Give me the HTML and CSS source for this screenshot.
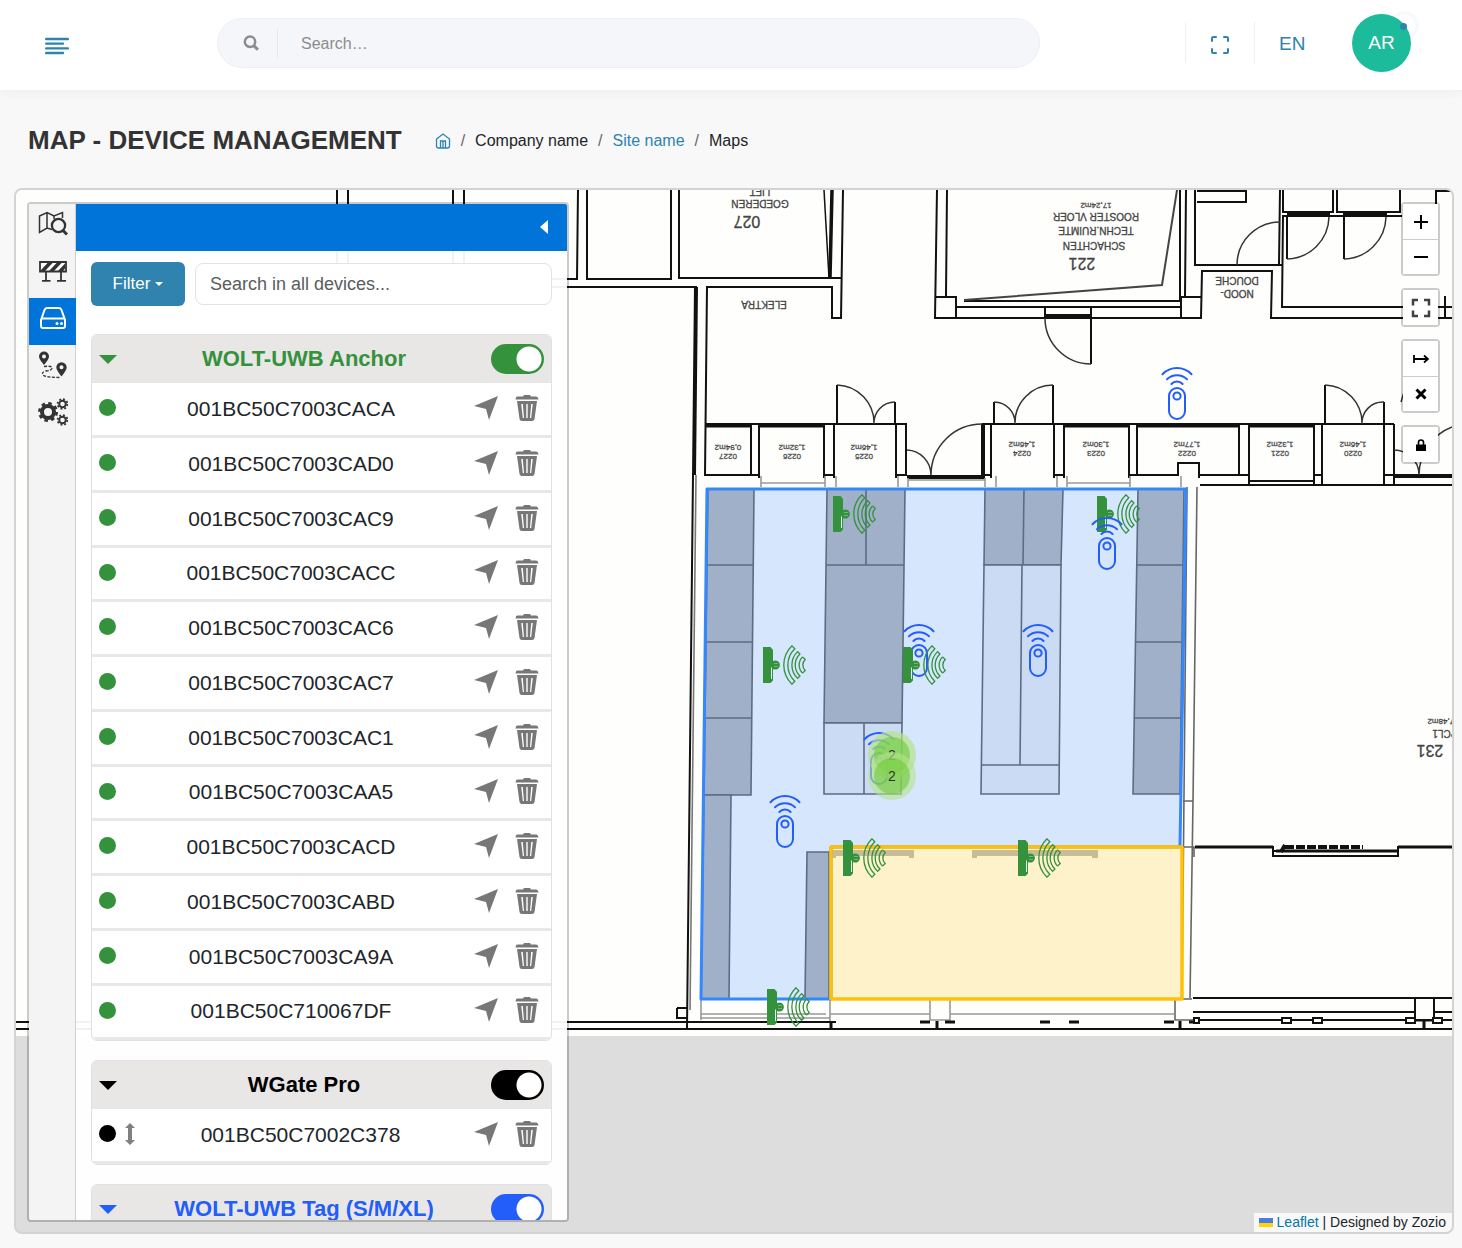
FILE: index.html
```html
<!DOCTYPE html>
<html lang="en">
<head>
<meta charset="utf-8">
<meta name="viewport" content="width=device-width, initial-scale=1">
<title>Map - Device management</title>
<link rel="stylesheet" href="styles.css">
</head>
<body>
<svg class="defs" aria-hidden="true">
  <symbol id="i-send" viewBox="0 0 24 24"><path d="M0 10 24 0 15 24 12 13Z"/></symbol>
  <symbol id="i-trash" viewBox="0 0 24 26"><path d="M1 2.500Q1 1.500 3 1.500H8L9 0h6l1 1.500h5Q23 1.500 23.500 4.500H.5Z"/><path fill-rule="evenodd" d="M2 6H22L19.500 24Q19.200 26 17 26H7Q4.800 26 4.500 24ZM6.200 9 7.800 23H9L7.800 9ZM11.300 9V23h1.400V9ZM16.200 9 15 23h1.200L17.800 9Z"/></symbol>
</svg>

<header class="topbar">
  <button class="icon-btn menu-btn" type="button" aria-label="Toggle menu">
    <svg width="24" height="18" viewBox="0 0 24 18" stroke="#2f83af" stroke-width="2.400" stroke-linecap="round"><path d="M1.200 2H22.800M1.200 6.600H18M1.200 11.400H22.800M1.200 16H18"/></svg>
  </button>
  <form class="search" role="search">
    <svg width="16" height="16" viewBox="0 0 16 16" fill="none" stroke="#8c8c8c" stroke-width="2.500"><circle cx="7" cy="6.800" r="5.200"/><path d="M10.800 10.600 15 14.800" stroke-width="3"/></svg>
    <input type="text" placeholder="Search…" aria-label="Search">
  </form>
  <nav class="tools">
    <button class="icon-btn fs-btn" type="button" aria-label="Full screen">
      <svg width="20" height="20" viewBox="0 0 20 20" fill="none" stroke="#2f83af" stroke-width="2" stroke-linecap="round"><path d="M2 6V3.500Q2 2 3.500 2H6M14 2h2.500Q18 2 18 3.500V6M18 14v2.500Q18 18 16.500 18H14M6 18H3.500Q2 18 2 16.500V14"/></svg>
    </button>
    <a class="lang" href="#lang">EN</a>
    <a class="avatar" href="#profile"><span class="ring"></span><span class="face">AR</span><span class="dot"></span></a>
  </nav>
</header>

<main class="page">
  <div class="titlebar">
    <h1>MAP - DEVICE MANAGEMENT</h1>
    <nav class="crumbs" aria-label="Breadcrumb">
      <a href="#home" aria-label="Home"><svg width="16" height="16" viewBox="0 0 16 16" fill="none" stroke="#2f83af" stroke-width="1.300"><path d="M1.500 6 8 1l6.500 5v7q0 2-2 2h-9q-2 0-2-2ZM5.500 15V8h5v7M8 8v7"/></svg></a>
      <span class="sep">/</span><span>Company name</span>
      <span class="sep">/</span><a href="#site">Site name</a>
      <span class="sep">/</span><span>Maps</span>
    </nav>
  </div>

  <section class="map" aria-label="Site map">
    <svg class="plan" viewBox="16 190 1436 1042" preserveAspectRatio="xMinYMin slice" role="img" aria-label="Floor plan">
      <defs>
        <g id="tag" fill="none" stroke="#235dfa" stroke-width="2" stroke-linecap="round">
          <path d="M-14.500 6.200A20 20 0 0 1 14.500 6.200M-10 11.200A14.500 14.500 0 0 1 10 11.200M-5.600 16A7.400 7.400 0 0 1 5.600 16"/>
          <rect x="-8" y="20" width="16" height="31" rx="8"/><circle cy="28" r="3.600"/>
        </g>
        <g id="anchor">
          <path d="M0-18H7.500L10-15V-4A4.600 4.600 0 1 1 10 4V15.500L7.500 18H0Z" fill="#34913c"/>
          <path d="M8.500 2.500V14" stroke="#e8f0fc"/><path d="M12-1.500v0M12 1.500v0M14-1.500v0M14 1.500v0" stroke="#dcebe0" stroke-linecap="round"/>
          <g transform="translate(47.500)" fill="none" stroke="#34913c" stroke-width="1.300">
            <path d="M-18.500-19.200A26.600 26.600 0 0 0-18.500 19.200L-15.700 16.300A22.600 22.600 0 0 1-15.700-16.300Z"/>
            <path d="M-12.900-13.400A18.600 18.600 0 0 0-12.900 13.400L-10.600 11A15.300 15.300 0 0 1-10.600-11Z"/>
            <path d="M-7.900-8.100A11.300 11.300 0 0 0-7.900 8.100M-7.900-8.100-5.300-5.500A7.600 7.600 0 0 0-5.300 5.500L-7.900 8.100"/>
          </g>
        </g>
      </defs>

      <rect x="16" y="190" width="1436" height="846" fill="#fefefd"/>
      <!-- storage racks -->
      <g fill="#bbb" stroke="#666" stroke-width="1.600">
        <path d="M708 489H754L751 795H704ZM707 565H753M706 642H752M705 718H752"/>
        <path d="M704 795H731L729 999H701Z"/>
        <path d="M827 489H905L902 723H824ZM826 565H904M866 489V565"/>
        <path d="M985 489H1063L1061 565H984ZM1024 489 1023 565"/>
        <path d="M1138 489H1184L1180 794H1133ZM1137 565H1183M1136 642H1182M1135 718H1181"/>
        <path d="M807 852H829V999H805Z"/>
      </g>
      <g fill="#f0f0f0" stroke="#666" stroke-width="1.600">
        <path d="M824 723H902L901 794H824ZM864 723V794"/>
        <path d="M984 565H1061L1059 794H981ZM982 765H1059M1022 565 1020 765"/>
      </g>
      <!-- structural walls -->
      <g fill="none" stroke="#111" stroke-width="2">
        <path d="M337 190V279M348 190V279H453V190M464 190V279H577L578 190M300 287H697M587 190V279H671V190M679 190V278H841M843 190 841 318H832V287H707L705 475H759"/>
        <path d="M824 190 829 278" stroke-width="1.500"/>
        <path d="M832 190 830 278" stroke-width="3.500"/>
        <path d="M696 287 694 475" stroke-width="4"/>
        <path d="M693 475 687 1028M677 1008H687M677 1008V1018H687"/>
        <path d="M937 190 935 318H1201L1202 271H1272L1271 318H1452M947 190 946 296M935 297H956V318M956 307H1181M964 301H1180M1180 190V300M1186 190 1185 296M1181 318V297H1201"/>
        <path d="M964 300 1162 285 1177 190" stroke="#444"/>
        <path d="M1195 190V265H1282M1280 190 1279 265M1197 191H1246V202H1197M1283 190V212H1333V190M1337 190V212H1400V190M1402 216H1283L1282 307H1452M1452 191H1436V210M1445 296V318"/>
        <path d="M1287 214H1330M1343 214H1387" stroke-width="4"/>
        <path d="M1045 318V307M1091 307V364"/><path d="M1045 316H1091" stroke-width="4"/>
        <path d="M705 424H907M982 424H1394M751 424V475M759 424V478M824 424V478M834 424V478M896 424V478M906 424V476M824 475H834M896 475H906M991 424V478M982 475H991M1054 424V478M1064 424V478M1054 475H1064M1129 424V478M1137 424V475M1129 475H1178V463H1199V478M1199 475H1249M1239 424V475M1249 424V484M1314 424V484M1322 424V484M1314 475H1322M1249 481H1314M1384 402V484M1394 424V484M1200 485H1452M1384 475H1394"/>
        <path d="M705 426H751M759 426H824M1064 426H1129M1137 426H1239M1249 426H1314" stroke-width="3"/>
        <path d="M907 477H985M983 424V477M1394 476H1452" stroke-width="4"/>
        <path d="M837 424V385M895 402V424M994 424V402M1053 385V424M1325 424V385M1287 216V259M1344 216V259"/>
      </g>
      <g fill="none" stroke="#333" stroke-width="1.500">
        <path d="M837 385A38 38 0 0 1 874 424A21 21 0 0 1 895 402M907 450A25 25 0 0 1 931 475A51 51 0 0 1 982 424M994 402A21 21 0 0 1 1015 424A38 38 0 0 1 1053 385M1325 385A38 38 0 0 1 1362 424A21 21 0 0 1 1384 402M1237 265A43 43 0 0 1 1280 222M1287 259A43 43 0 0 0 1329 217M1344 259A43 43 0 0 0 1386 217M1045 318A46 46 0 0 0 1091 364M1394 450A25 25 0 0 1 1419 475A52 52 0 0 1 1452 427M1401 402 1404 392"/>
      </g>
      <g fill="none" stroke="#999" stroke-width="1.600">
        <path d="M761 476V487M825 476V487M836 476V487M898 476V487M908 478V487M985 478V487M996 476V487M1057 476V487M1067 476V487M1130 476V487M1181 476V487M761 483H825M908 480H985M1067 483H1130"/>
        <path d="M696 475 690 1010" stroke="#777"/>
        <path d="M1197 487 1193 801 1190 998M1187 487 1182 1000M1183 801H1193M1181 847H1194V857M1182 999H1192M1175 1000V1020H1193" stroke="#666"/>
        <path d="M701 1000V1020M830 1000V1022M930 1000V1020H950V1000M701 1014H826M701 1018H830M830 1014H930M950 1014H1175"/>
      </g>
      <g fill="#bbb"><path d="M831 850H914V858H909V856H836V858H831ZM972 850H1098V858H1092V856H977V858H972Z"/></g>
      <!-- lower facade -->
      <g fill="none" stroke="#111" stroke-width="2">
        <path d="M16 1022H836M16 1029H1452M1193 998H1452M1193 1012H1452M1193 1020H1452"/>
        <path d="M1195 847H1273M1398 847H1452M831 1022V1029M937 1021V1029M1180 1021V1029M1424 1020V1029M920 1022H930M945 1022H955M1040 1022H1050M1069 1022H1079M1164 1022H1174M1189 1022H1199M1415 1020H1434" stroke-width="3"/>
        <path d="M1273 846V856H1398V846M1273 851H1398"/><path d="M1276 851H1398" stroke-width="3"/><path d="M1281 852 1285 845M1285 847H1363" stroke-width="4" stroke-dasharray="9 2"/>
        <g fill="#fefefd"><path d="M1415 998H1434V1020H1415Z"/><path d="M1194 1018h5v5h-5ZM1282 1018h9v5h-9ZM1313 1018h9v5h-9ZM1406 1018h9v5h-9ZM1433 1018h9v5h-9Z"/></g>
      </g>
      <!-- room names, printed upside down on the plan -->
      <g class="rooms">
        <g transform="rotate(180 760 205)"><text x="760" y="222">LIFT</text><text x="760" y="210">GOEDEREN</text><text class="num" x="773" y="194">027</text></g>
        <g transform="rotate(180 764 305)"><text x="764" y="309">ELEKTRA</text></g>
        <g transform="rotate(180 1096 230)"><text class="tiny" x="1096" y="257">17,24m2</text><text x="1096" y="247">ROOSTER VLOER</text><text x="1096" y="233">TECHN.RUIMTE</text><text x="1098" y="218">SCHACHTEN</text><text class="num" x="1110" y="202">221</text></g>
        <g transform="rotate(180 1237 287)"><text x="1237" y="297">DOUCHE</text><text x="1237" y="284">NOOD-</text></g>
        <g class="tiny">
          <text transform="rotate(180 728 452)" x="728" y="459">0,94m2<tspan x="728" dy="-9">0227</tspan></text>
          <text transform="rotate(180 792 452)" x="792" y="459">1,32m2<tspan x="792" dy="-9">0226</tspan></text>
          <text transform="rotate(180 864 452)" x="864" y="459">1,46m2<tspan x="864" dy="-9">0225</tspan></text>
          <text transform="rotate(180 1022 450)" x="1022" y="458">1,46m2<tspan x="1022" dy="-9">0224</tspan></text>
          <text transform="rotate(180 1096 450)" x="1096" y="458">1,30m2<tspan x="1096" dy="-9">0223</tspan></text>
          <text transform="rotate(180 1187 450)" x="1187" y="458">1,77m2<tspan x="1187" dy="-9">0222</tspan></text>
          <text transform="rotate(180 1280 450)" x="1280" y="458">1,32m2<tspan x="1280" dy="-9">0221</tspan></text>
          <text transform="rotate(180 1353 450)" x="1353" y="458">1,46m2<tspan x="1353" dy="-9">0220</tspan></text>
          <text transform="rotate(180 1443 722)" x="1443" y="725">17,48m2</text>
        </g>
        <text transform="rotate(180 1445 734)" x="1445" y="738">PCL1</text>
        <text class="num" transform="rotate(180 1430 751)" x="1430" y="757">231</text>
      </g>
      <!-- zones -->
      <path d="M707 489H1186L1180 847H831V999H701Z" fill="#3388ff" fill-opacity=".2" stroke="#3388ff" stroke-width="3" stroke-linejoin="round"/>
      <path d="M831 847H1182V999H831Z" fill="#ffc107" fill-opacity=".2" stroke="#ffc107" stroke-width="3.500" stroke-linejoin="round"/>
      <!-- devices -->
      <use href="#tag" x="1177" y="368"/><use href="#tag" x="919" y="625"/><use href="#tag" x="1038" y="625"/><use href="#tag" x="879" y="733"/><use href="#tag" x="785" y="796"/>
      <use href="#anchor" x="833" y="514"/><use href="#anchor" x="1097" y="514"/><use href="#anchor" x="763" y="665"/><use href="#anchor" x="903" y="665"/><use href="#anchor" x="843" y="858"/><use href="#anchor" x="1018" y="858"/><use href="#anchor" x="767" y="1007"/>
      <use href="#tag" x="1107" y="518"/>
      <g class="cluster"><circle cx="892" cy="755" r="24" fill="#b5e28c" fill-opacity=".7"/><circle cx="892" cy="755" r="18" fill="#6ecc39" fill-opacity=".6"/><text x="892" y="760">2</text></g>
      <g class="cluster"><circle cx="892" cy="776" r="24" fill="#b5e28c" fill-opacity=".6"/><circle cx="892" cy="776" r="18" fill="#6ecc39" fill-opacity=".6"/><text x="892" y="781">2</text></g>
    </svg>

    <aside class="sidebar">
      <nav class="tabs" aria-label="Map panels">
        <button type="button" aria-label="Maps"><svg width="30" height="26" viewBox="0 0 30 26" fill="none" stroke="#333" stroke-width="1.500"><path d="M14 18.500 9 17 1.500 21.500V5L9 1.500 16 5 24.500 1.500V7M9 1.500V17M16 5V8"/><circle cx="20.500" cy="14.500" r="6.600" stroke-width="2.300"/><path d="M25 19.500 29 23.500" stroke-width="3"/></svg></button>
        <button type="button" aria-label="Zones"><svg width="28" height="22" viewBox="0 0 28 22"><path d="M1 2H27V11.500H1Z" fill="#fff" stroke="#333" stroke-width="1.800"/><path d="M2 10 9 2.500h5L6 11H2ZM10 11l8-8.500h5L15 11ZM19 11l7-7.500V8.500L24 11Z" fill="#333"/><path d="M7 12V20M3 20.800h8.500M22 12v8M18 20.800h9" stroke="#333" stroke-width="1.800"/></svg></button>
        <button class="active" type="button" aria-label="Devices"><svg width="26" height="22" viewBox="0 0 26 22" fill="none" stroke="#fff" stroke-width="2"><path d="M1 13 4.500 3Q5.200 1 7 1H19Q20.800 1 21.500 3L25 13V19Q25 21 23 21H3Q1 21 1 19ZM1.500 11.500H24.500"/><path d="M17 16.500v0M21.500 16.500v0" stroke-width="3" stroke-linecap="round"/></svg></button>
        <button type="button" aria-label="Routes"><svg width="30" height="28" viewBox="0 0 30 28"><path fill="#333" fill-rule="evenodd" d="M6 14Q1 8 1 5.500A5 5 0 0 1 11 5.500Q11 8 6 14ZM6 3.500A2 2 0 1 0 6 7.500 2 2 0 0 0 6 3.500ZM23.500 25.500Q18.300 19 18.300 16.500A5.200 5.200 0 0 1 28.700 16.500Q28.700 19 23.500 25.500ZM23.500 14.300A2 2 0 1 0 23.500 18.300 2 2 0 0 0 23.500 14.300Z"/><path d="M6 15.500Q15 14.500 14 17.500 13 19.500 8 20 3 21 5 24 8 26.500 23 26.500" fill="none" stroke="#333" stroke-width="1.300" stroke-dasharray="3 1.500"/></svg></button>
        <button type="button" aria-label="Settings"><svg width="30" height="28" viewBox="0 0 30 28" fill="none" stroke="#333"><circle cx="10" cy="14" r="6" stroke-width="4"/><circle cx="10" cy="14" r="8.700" stroke-width="2.600" stroke-dasharray="3.500 3.333"/><circle cx="24.500" cy="6" r="3.300" stroke-width="2"/><circle cx="24.500" cy="6" r="4.900" stroke-width="1.800" stroke-dasharray="1.900 1.940"/><circle cx="24.500" cy="22" r="3.300" stroke-width="2"/><circle cx="24.500" cy="22" r="4.900" stroke-width="1.800" stroke-dasharray="1.900 1.940"/></svg></button>
      </nav>
      <div class="panel">
        <div class="panel-head"><button class="icon-btn" type="button" aria-label="Collapse"><svg width="10" height="16" viewBox="0 0 10 16" fill="#fff"><path d="M9 1V15L1 8Z"/></svg></button></div>
        <div class="panel-body">
          <div class="filters">
            <button class="filter" type="button">Filter<span class="caret"></span></button>
            <input class="find" type="text" placeholder="Search in all devices..." aria-label="Search in all devices">
          </div>

          <section class="group green">
            <div class="group-head"><span class="fold"></span><h2>WOLT-UWB Anchor</h2><input class="toggle" type="checkbox" aria-label="Show WOLT-UWB Anchor" checked></div>
            <ul>
              <li><span class="status"></span><span class="name">001BC50C7003CACA</span><button type="button" aria-label="Locate"><svg width="24" height="24"><use href="#i-send"/></svg></button><button type="button" aria-label="Delete"><svg width="24" height="26"><use href="#i-trash"/></svg></button></li>
              <li><span class="status"></span><span class="name">001BC50C7003CAD0</span><button type="button" aria-label="Locate"><svg width="24" height="24"><use href="#i-send"/></svg></button><button type="button" aria-label="Delete"><svg width="24" height="26"><use href="#i-trash"/></svg></button></li>
              <li><span class="status"></span><span class="name">001BC50C7003CAC9</span><button type="button" aria-label="Locate"><svg width="24" height="24"><use href="#i-send"/></svg></button><button type="button" aria-label="Delete"><svg width="24" height="26"><use href="#i-trash"/></svg></button></li>
              <li><span class="status"></span><span class="name">001BC50C7003CACC</span><button type="button" aria-label="Locate"><svg width="24" height="24"><use href="#i-send"/></svg></button><button type="button" aria-label="Delete"><svg width="24" height="26"><use href="#i-trash"/></svg></button></li>
              <li><span class="status"></span><span class="name">001BC50C7003CAC6</span><button type="button" aria-label="Locate"><svg width="24" height="24"><use href="#i-send"/></svg></button><button type="button" aria-label="Delete"><svg width="24" height="26"><use href="#i-trash"/></svg></button></li>
              <li><span class="status"></span><span class="name">001BC50C7003CAC7</span><button type="button" aria-label="Locate"><svg width="24" height="24"><use href="#i-send"/></svg></button><button type="button" aria-label="Delete"><svg width="24" height="26"><use href="#i-trash"/></svg></button></li>
              <li><span class="status"></span><span class="name">001BC50C7003CAC1</span><button type="button" aria-label="Locate"><svg width="24" height="24"><use href="#i-send"/></svg></button><button type="button" aria-label="Delete"><svg width="24" height="26"><use href="#i-trash"/></svg></button></li>
              <li><span class="status"></span><span class="name">001BC50C7003CAA5</span><button type="button" aria-label="Locate"><svg width="24" height="24"><use href="#i-send"/></svg></button><button type="button" aria-label="Delete"><svg width="24" height="26"><use href="#i-trash"/></svg></button></li>
              <li><span class="status"></span><span class="name">001BC50C7003CACD</span><button type="button" aria-label="Locate"><svg width="24" height="24"><use href="#i-send"/></svg></button><button type="button" aria-label="Delete"><svg width="24" height="26"><use href="#i-trash"/></svg></button></li>
              <li><span class="status"></span><span class="name">001BC50C7003CABD</span><button type="button" aria-label="Locate"><svg width="24" height="24"><use href="#i-send"/></svg></button><button type="button" aria-label="Delete"><svg width="24" height="26"><use href="#i-trash"/></svg></button></li>
              <li><span class="status"></span><span class="name">001BC50C7003CA9A</span><button type="button" aria-label="Locate"><svg width="24" height="24"><use href="#i-send"/></svg></button><button type="button" aria-label="Delete"><svg width="24" height="26"><use href="#i-trash"/></svg></button></li>
              <li><span class="status"></span><span class="name">001BC50C710067DF</span><button type="button" aria-label="Locate"><svg width="24" height="24"><use href="#i-send"/></svg></button><button type="button" aria-label="Delete"><svg width="24" height="26"><use href="#i-trash"/></svg></button></li>
            </ul>
          </section>

          <section class="group black">
            <div class="group-head"><span class="fold"></span><h2>WGate Pro</h2><input class="toggle" type="checkbox" aria-label="Show WGate Pro" checked></div>
            <ul>
              <li><span class="status"></span><svg class="updown" width="10" height="22" viewBox="0 0 10 22" fill="#808080"><path d="M5 0 10 5H7V17H10L5 22 0 17H3V5H0Z"/></svg><span class="name">001BC50C7002C378</span><button type="button" aria-label="Locate"><svg width="24" height="24"><use href="#i-send"/></svg></button><button type="button" aria-label="Delete"><svg width="24" height="26"><use href="#i-trash"/></svg></button></li>
            </ul>
          </section>

          <section class="group blue">
            <div class="group-head"><span class="fold"></span><h2>WOLT-UWB Tag (S/M/XL)</h2><input class="toggle" type="checkbox" aria-label="Show WOLT-UWB Tag" checked></div>
          </section>
        </div>
      </div>
    </aside>

    <div class="controls">
      <div class="bar">
        <button type="button" aria-label="Zoom in"><svg width="16" height="16" viewBox="0 0 16 16" stroke="#000" stroke-width="2"><path d="M1 8H15M8 1V15"/></svg></button>
        <button type="button" aria-label="Zoom out"><svg width="16" height="16" viewBox="0 0 16 16" stroke="#000" stroke-width="2"><path d="M1 8H15"/></svg></button>
      </div>
      <div class="bar"><button type="button" aria-label="Full screen map"><svg width="20" height="20" viewBox="0 0 20 20" fill="none" stroke="#404040" stroke-width="2.500"><path d="M2 7.500V2H7M13 2h5V7.500M18 12.500V18H13M7 18H2V12.500"/></svg></button></div>
      <div class="bar">
        <button type="button" aria-label="Measure"><svg width="16" height="10" viewBox="0 0 16 10" fill="none" stroke="#000" stroke-width="1.800"><path d="M1 1V9M1 5H15M11 1.500 15 5 11 8.500"/></svg></button>
        <button type="button" aria-label="Clear"><svg width="12" height="12" viewBox="0 0 12 12" stroke="#000" stroke-width="3"><path d="M1.500 1.500 10.500 10.500M10.500 1.500 1.500 10.500"/></svg></button>
      </div>
      <div class="bar"><button type="button" aria-label="Lock"><svg width="10" height="12" viewBox="0 0 10 12"><path d="M0 5.500H10V12H0Z"/><path d="M2.500 6V3.500a2.500 2.500 0 0 1 5 0V6" fill="none" stroke="#000" stroke-width="1.600"/></svg></button></div>
    </div>

    <div class="credit"><svg width="14" height="9" viewBox="0 0 14 9"><path fill="#4c7be1" d="M0 0h14v5H0z"/><path fill="#ffd500" d="M0 5h14v4H0z"/></svg><span><a href="#leaflet">Leaflet</a> | Designed by Zozio</span></div>
  </section>
</main>
</body>
</html>
```
FILE: styles.css
```css
* { box-sizing: border-box; }
body {
  margin: 0;
  height: 100vh;
  display: flex;
  flex-direction: column;
  background: #f8f8f8;
  color: #212529;
  font: 16px/24px "Liberation Sans", Arial, sans-serif;
}
button, input { font: inherit; color: inherit; margin: 0; }
button { cursor: pointer; padding: 0; border: 0; background: none; }
a { color: #2f83af; text-decoration: none; }
svg { display: block; }
.defs { position: absolute; width: 0; height: 0; }

/* top bar */
.topbar {
  flex: none;
  height: 91px;
  display: flex;
  align-items: center;
  padding: 0 51px 5px 45px;
  background: #fff;
  border-bottom: 1px solid #f1f2f6;
  box-shadow: 0 2px 10px rgba(50, 60, 120, .05);
}
.icon-btn { display: grid; place-items: center; }
.menu-btn { width: 24px; padding-top: 6px; }
.search {
  flex: 1;
  height: 50px;
  margin: 0 145px 0 148px;
  display: flex;
  align-items: center;
  padding-left: 25px;
  background: #f5f6fa;
  border: 1px solid #eeeff3;
  border-radius: 25px;
}
.search input {
  flex: 1;
  height: 30px;
  margin-left: 18px;
  padding: 2px 23px 0;
  border: 0;
  border-left: 1px solid #e6e7ec;
  background: none;
  outline: 0;
}
.search input::placeholder { color: #8c8c8c; opacity: 1; }
.tools { display: flex; align-items: center; }
.fs-btn { width: 69px; height: 40px; padding-top: 4px; border-left: 1px solid #eee; }
.lang { width: 98px; height: 42px; padding-left: 24px; border-left: 1px solid #eee; font-size: 19px; line-height: 44px; }
.avatar { position: relative; width: 59px; height: 58px; }
.face {
  position: relative;
  display: block;
  height: 58px;
  border-radius: 50%;
  background: #1cbb9b;
  color: #fff;
  font-size: 19px;
  line-height: 58px;
  text-align: center;
}
.ring { position: absolute; top: -3px; right: -8px; width: 29px; height: 29px; border: 4px solid #f7f9fc; border-radius: 50%; }
.dot { position: absolute; top: 9px; right: 4px; width: 7px; height: 7px; border-radius: 50%; background: #2f83af; }

/* page */
.page { flex: 1; min-height: 0; display: flex; flex-direction: column; padding: 0 8px 14px 14px; }
.titlebar { flex: none; height: 97px; display: flex; align-items: center; gap: 33px; padding: 0 14px; }
h1 { margin: 0; font-size: 26px; line-height: 32px; color: #333; }
.crumbs { display: flex; align-items: center; gap: 10px; padding-top: 2px; }
.sep { color: #666; }

/* map */
.map {
  flex: 1;
  min-height: 0;
  position: relative;
  overflow: hidden;
  border: 2px solid #d3d3d3;
  border-radius: 8px;
  background: #ddd;
}
.plan { width: 100%; height: 100%; }
.rooms { fill: #444; stroke: #444; stroke-width: .3px; font-size: 10px; text-anchor: middle; }
.rooms .num { font-size: 16px; }
.rooms .tiny { font-size: 8px; fill: #666; }
.cluster text { font-size: 14px; fill: #333; text-anchor: middle; }

/* sidebar over the map */
.sidebar {
  position: absolute;
  top: 12px;
  bottom: 10px;
  left: 11px;
  width: 542px;
  display: flex;
  overflow: hidden;
  border: 2px solid rgba(0, 0, 0, .2);
  border-radius: 4px;
  background-clip: padding-box;
}
.tabs { flex: none; width: 47px; background: #f4f4f4; box-shadow: inset -1px 0 #d0d0d0; }
.tabs button { display: grid; place-items: center; width: 47px; height: 47px; padding-bottom: 7px; }
.tabs .active { background: #0074d9; }
.panel { flex: 1; display: flex; flex-direction: column; background: rgba(255, 255, 255, .95); }
.panel-head { flex: none; height: 47px; display: flex; justify-content: flex-end; padding: 0 18px 2px 0; background: #0074d9; }
.panel-body { flex: 1; min-height: 0; overflow: hidden; padding: 11px 15px 0; }
.filters { display: flex; align-items: center; gap: 10px; margin-bottom: 28px; }
.filter { display: flex; align-items: center; justify-content: center; gap: 5px; width: 94px; height: 44px; border-radius: 6px; background: #3083af; color: #fff; font-size: 17px; }
.caret { border: 4px solid transparent; border-top-color: #fff; border-bottom: 0; }
.find { flex: 1; min-width: 0; height: 42px; padding: 0 14px; border: 1px solid #e0e3e8; border-radius: 8px; background: #fff; font-size: 18px; outline: 0; }
.find::placeholder { color: #595c5f; opacity: 1; }

.group { margin-bottom: 19px; border: 1px solid #dee2e6; border-radius: 6px; background: #fff; overflow: hidden; }
.green { --tone: #34913c; }
.black { --tone: #000; }
.blue { --tone: #235dfa; }
.group-head { display: flex; align-items: center; height: 48px; padding: 0 7px; background: #e8e7e6; color: var(--tone); }
.group-head h2 { flex: 1; margin: 0; font-size: 22px; line-height: 28px; text-align: center; }
.fold { border: 9px solid transparent; border-top-color: var(--tone); border-bottom: 0; }
.toggle {
  appearance: none;
  width: 53px;
  height: 30px;
  border-radius: 15px;
  background: var(--tone) radial-gradient(circle at 38px 15px, #fff 12px, transparent 13px);
}
.group ul { margin: 0; padding: 0; list-style: none; }
.group li { display: flex; align-items: center; height: 55px; padding: 0 12px 3px 7px; border-bottom: 3px solid #e8e8e8; }
.group li:nth-child(4n) { height: 54px; }
.status { width: 17px; height: 17px; border-radius: 50%; background: var(--tone); }
.updown { margin-left: 9px; }
.name { flex: 1; font-size: 21px; text-align: center; padding-top: 2px; }
.group li button { display: grid; place-items: center; fill: #777; margin-left: 17px; }
.group li .name + button { margin-left: 8px; }

/* map controls */
.controls { position: absolute; top: 12px; right: 12px; display: flex; flex-direction: column; gap: 12px; }
.bar { border: 2px solid rgba(0, 0, 0, .2); border-radius: 4px; }
.bar button { display: grid; place-items: center; width: 35px; height: 35px; background: #fff; }
.bar button + button { border-top: 1px solid #ccc; }
.credit { position: absolute; right: 0; bottom: 0; display: flex; align-items: center; gap: 4px; padding: 0 6px 0 5px; background: rgba(255, 255, 255, .8); font-size: 14px; line-height: 19px; }
.credit a { color: #0078a8; }
```
